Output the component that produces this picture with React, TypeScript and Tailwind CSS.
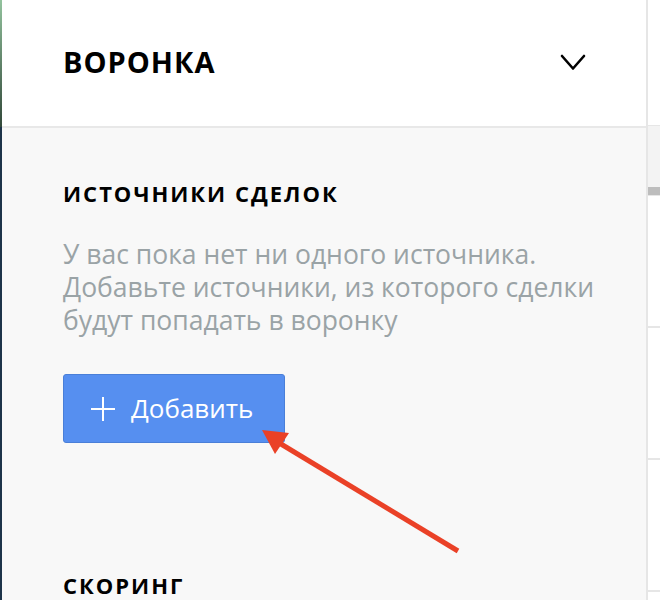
function SideStrip() {
  return (
    <div className="flex w-[2px] shrink-0 flex-col">
      <div className="h-[127px] bg-gradient-to-b from-[#93c39e] to-[#32493a]" />
      <div className="flex-1 bg-[#1d3349]" />
    </div>
  );
}

function RightStrip() {
  return (
    <div className="flex flex-1 flex-col bg-white">
      <div className="h-[126px] border-b border-[#e6e6e6]" />
      <div className="h-[61px] bg-[#f3f3f3]" />
      <div className="h-[8px] bg-[#bdbdbd]" />
      <div className="h-[133px] border-t border-[#e6e6e6] border-b-2" />
      <div className="h-[132px] border-b-2 border-[#e6e6e6]" />
      <div className="h-[132px] border-b-2 border-[#e6e6e6]" />
    </div>
  );
}

export default function App() {
  return (
    <div
      className="relative flex h-[600px] w-[660px] overflow-hidden bg-white"
      style={{ fontFamily: '"Open Sans", "Noto Sans", sans-serif' }}
    >
      <SideStrip />

      <div className="flex w-[646px] shrink-0 flex-col border-r-2 border-[#e6e6e6] bg-[#f8f8f8]">
        <div className="flex h-[128px] shrink-0 items-center justify-between border-b-2 border-[#e8e8e8] bg-white pl-[61px] pr-[60px]">
          <h1 className="pb-[2px] text-[29px] font-bold tracking-[1px] text-black">ВОРОНКА</h1>
          <svg width="26" height="17" viewBox="0 0 26 17" className="mb-[2px]" fill="none">
            <polyline
              points="2,2 13,14.5 24,2"
              stroke="#000"
              strokeWidth="2.6"
              strokeLinecap="round"
              strokeLinejoin="round"
            />
          </svg>
        </div>

        <div className="flex flex-col pl-[61px] pr-[30px] pt-[50px]">
          <h2 className="text-[22px] font-bold leading-[30px] tracking-[2px] text-black">
            ИСТОЧНИКИ СДЕЛОК
          </h2>
          <div className="mt-[30px] flex flex-col whitespace-nowrap text-[26.5px] leading-[33px] text-[#9aa3a6]">
            <span>У вас пока нет ни одного источника.</span>
            <span>Добавьте источники, из которого сделки</span>
            <span>будут попадать в воронку</span>
          </div>
          <button className="mt-[37px] flex h-[69px] w-[222px] items-center gap-[16px] rounded-[3px] border border-[#4a7fd8] bg-[#568ff0] pl-[27px] text-[26px] text-white">
            <svg width="24" height="24" viewBox="0 0 24 24" fill="none">
              <path d="M12 0v24M0 12h24" stroke="#fff" strokeWidth="2" />
            </svg>
            Добавить
          </button>

          <h2 className="mt-[127px] text-[22px] font-bold leading-[30px] tracking-[2px] text-black">
            СКОРИНГ
          </h2>
        </div>
      </div>

      <RightStrip />

      <svg
        className="pointer-events-none absolute left-0 top-0"
        width="660"
        height="600"
        viewBox="0 0 660 600"
      >
        <line x1="458" y1="551" x2="276" y2="441" stroke="#ea4127" strokeWidth="5" />
        <polygon points="262,430 289,433 275,454" fill="#ea4127" />
      </svg>
    </div>
  );
}
